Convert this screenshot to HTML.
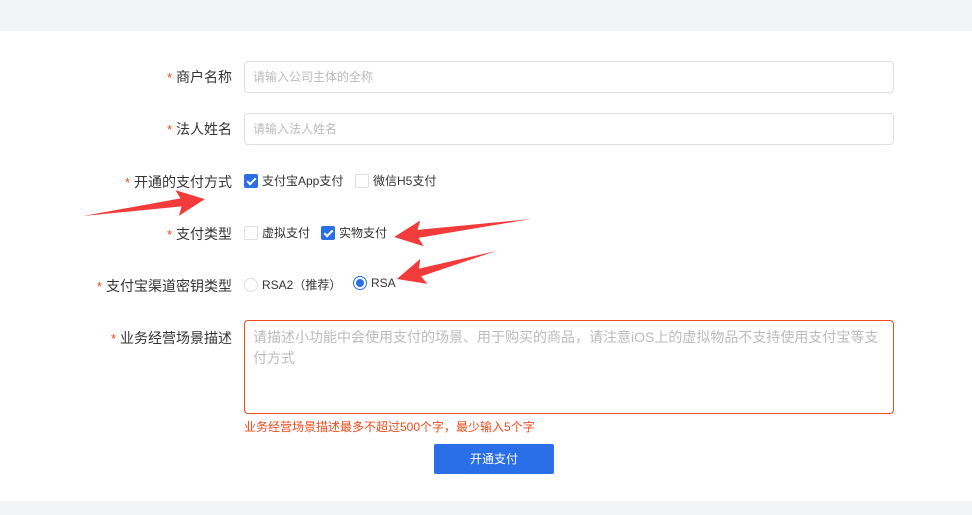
<!DOCTYPE html>
<html><head><meta charset="utf-8"><style>
*{box-sizing:border-box;margin:0;padding:0}
body{width:972px;height:515px;background:#f3f4f6;font-family:"Liberation Sans","Noto Sans CJK SC",sans-serif;position:relative;overflow:hidden;color:#333}
.card{position:absolute;left:0;top:31px;width:972px;height:470px;background:#fff}
.lab{position:absolute;right:740px;font-size:14px;color:#333;white-space:nowrap}
.lab b{color:#f04a1a;font-weight:normal;margin-right:4px;font-size:13px}
.inp{position:absolute;left:244px;width:650px;height:32px;border:1px solid #dcdfe6;border-radius:4px;font-size:12px;color:#bbb;padding:0 8px;line-height:30px}
.opt{position:absolute;font-size:12px;color:#333;white-space:nowrap;display:flex;align-items:center}
.cb{width:14px;height:14px;border:1px solid #dcdfe6;border-radius:2px;margin-right:4px;display:inline-block;position:relative}
.cb.on{background:#2a6fe8;border-color:#2a6fe8}
.cb.on:after{content:"";position:absolute;left:4px;top:1px;width:3px;height:7px;border:solid #fff;border-width:0 2px 2px 0;transform:rotate(45deg)}
.rd{width:14px;height:14px;border:1px solid #dcdfe6;border-radius:50%;margin-right:4px;display:inline-block;position:relative}
.rd.on{border-color:#2a6fe8}
.rd.on:after{content:"";position:absolute;left:2px;top:2px;width:8px;height:8px;border-radius:50%;background:#2a6fe8}
</style></head><body>
<div class="card"></div>
<div class="lab" style="top:67px"><b>*</b>商户名称</div>
<div class="inp" style="top:61px">请输入公司主体的全称</div>
<div class="lab" style="top:119px"><b>*</b>法人姓名</div>
<div class="inp" style="top:113px">请输入法人姓名</div>
<div class="lab" style="top:172px"><b>*</b>开通的支付方式</div>
<div class="opt" style="left:244px;top:172px"><span class="cb on"></span>支付宝App支付</div>
<div class="opt" style="left:355px;top:172px"><span class="cb"></span>微信H5支付</div>
<div class="lab" style="top:224px"><b>*</b>支付类型</div>
<div class="opt" style="left:244px;top:224px"><span class="cb"></span>虚拟支付</div>
<div class="opt" style="left:321px;top:224px"><span class="cb on"></span>实物支付</div>
<div class="lab" style="top:276px"><b>*</b>支付宝渠道密钥类型</div>
<div class="opt" style="left:244px;top:276px"><span class="rd"></span>RSA2（推荐）</div>
<div class="opt" style="left:353px;top:276px"><span class="rd on"></span>RSA</div>
<div class="lab" style="top:328px"><b>*</b>业务经营场景描述</div>
<div style="position:absolute;left:244px;top:320px;width:650px;height:94px;border:1px solid #f04a1a;border-radius:4px;font-size:14px;color:#bbb;padding:6px 8px;line-height:21px">请描述小功能中会使用支付的场景、用于购买的商品，请注意iOS上的虚拟物品不支持使用支付宝等支付方式</div>
<div style="position:absolute;left:244px;top:418px;font-size:12px;color:#f04a1a">业务经营场景描述最多不超过500个字，最少输入5个字</div>
<div style="position:absolute;left:434px;top:444px;width:120px;height:30px;background:#2a6fe8;border-radius:2px;color:#fff;font-size:12px;text-align:center;line-height:30px">开通支付</div>
<svg width="972" height="515" style="position:absolute;left:0;top:0">
<g fill="#f23c3c">
<polygon transform="translate(83,216) rotate(-7.9)" points="0,0 99,-4 95,-13 123,0 95,13 99,4"/>
<polygon transform="translate(531,219) rotate(172.5)" points="0,0 114,-4 110,-13 138,0 110,13 114,4"/>
<polygon transform="translate(496,251) rotate(164.2)" points="0,0 79,-4 75,-13 103,0 75,13 79,4"/>
</g></svg>
</body></html>
